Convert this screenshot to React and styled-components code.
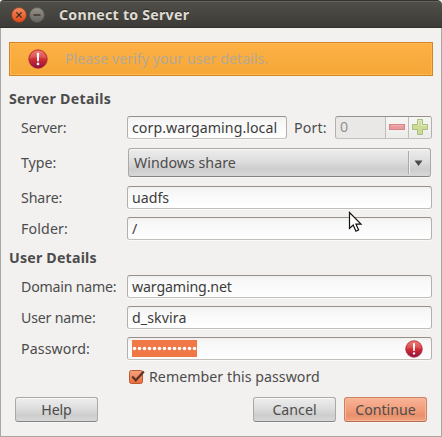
import React from "react";
import styled, { createGlobalStyle, css } from "styled-components";

const GlobalStyle = createGlobalStyle`
  html, body { margin: 0; padding: 0; background: #f2f1f0; overflow: hidden; }
  *, *::before, *::after { box-sizing: border-box; }
`;

const Window = styled.div`
  position: relative;
  width: 442px;
  height: 437px;
  display: flex;
  flex-direction: column;
  background: #f2f1f0;
  color: #4c4c4c;
  font: 14.2px/20px "Noto Sans", "Open Sans", sans-serif;
  white-space: nowrap;
`;

const TitleBar = styled.header`
  height: 28px;
  flex: none;
  display: flex;
  align-items: center;
  gap: 2px;
  padding: 1px 0 0 11px;
  background: linear-gradient(#504f49, #3c3b37);
  border-top: 1px solid #353430;
  border-bottom: 1px solid #31302c;
  box-shadow: inset 0 1px #65635c;
  border-radius: 4px 5px 0 0;
`;

const Title = styled.h1`
  margin: 0 0 0 12px;
  font-size: 14.2px;
  line-height: 20px;
  font-weight: 700;
  color: #dfdbd2;
  letter-spacing: ${(p) => p.$track}px;
  text-shadow: 0 -1px #2c2b28;
`;

const Body = styled.main`
  height: 409px;
  display: flex;
  flex-direction: column;
  padding: 14px 8px 0;
  border: solid #aaa6a2;
  border-width: 0 1px 1px;
`;

const Banner = styled.div`
  height: 34px;
  display: flex;
  align-items: center;
  gap: 17px;
  padding-left: 18px;
  border: 1px solid #cf8626;
  background: linear-gradient(#fdb146, #f5a737);
  box-shadow: inset 0 0 0 1px #ffb750;
  color: #b5a893;
`;

const Label = styled.span`
  letter-spacing: ${(p) => p.$track || 0}px;
`;

const Heading = styled.h2`
  margin: ${(p) => p.$top}px 0 0;
  height: 20px;
  font-size: 14.2px;
  line-height: 20px;
  font-weight: 700;
  letter-spacing: ${(p) => p.$track || 0}px;
`;

const Row = styled.div`
  display: grid;
  grid-template-columns: 106px 305px;
  align-items: center;
  height: ${(p) => p.$height || 23}px;
  margin: ${(p) => p.$top || 8}px 0 0 12px;
`;

const fieldEdge = css`
  border: 1px solid #b5b0aa;
  border-top-color: #97908a;
  border-bottom-color: #c3c0bc;
  border-radius: 3px;
`;

const Field = styled.div`
  ${fieldEdge}
  height: 23px;
  width: ${(p) => p.$width || 305}px;
  display: flex;
  align-items: center;
  justify-content: space-between;
  padding: 0 8px 0 4px;
  background: linear-gradient(#f1f1f1, #f7f7f7 20%, #fff);
  box-shadow: 0 1px #faf9f9;
  color: #3c3c3c;
`;

const ServerFields = styled.div`
  display: flex;
  align-items: center;
`;

const PortLabel = styled(Label)`
  width: 41px;
  margin-left: 7px;
`;

const Spin = styled.div`
  ${fieldEdge}
  width: 97px;
  height: 23px;
  display: grid;
  grid-template-columns: 49px 23px 23px;
  overflow: hidden;
  background: #e9e8e7;
  color: #929190;
`;

const SpinValue = styled.span`
  padding-left: 4px;
`;

const SpinButton = styled.button`
  padding: 0 1px 0 0;
  border: 0;
  border-left: 1px solid #c1beba;
  background: linear-gradient(#f5f5f4, #ececeb);
  display: grid;
  place-items: center;
`;

const raised = css`
  border: 1px solid #aaa9a7;
  border-bottom-color: #858482;
  border-radius: 3px;
  background: linear-gradient(#ededed, #dedede 45%, #cdcdcd 75%, #d8d8d8);
  box-shadow: inset 0 1px #f8f8f8, 0 1px #f8f7f6;
`;

const Combo = styled.div`
  ${raised}
  width: 303px;
  height: 29px;
  margin-left: 1px;
  padding-left: 5px;
  display: flex;
  align-items: center;
  justify-content: space-between;
`;

const ComboArrow = styled.span`
  width: 22px;
  height: 23px;
  display: grid;
  place-items: center;
  padding-right: 3px;
  border-left: 1px solid #aaa;
  box-shadow: inset 1px 0 #ececec;
`;

const Selection = styled.span`
  width: 65px;
  height: 17px;
  display: flex;
  align-items: center;
  background: #f07746;
`;

const Remember = styled.label`
  height: 20px;
  margin: 7px 0 0 120px;
  display: flex;
  align-items: center;
  gap: 4px;
`;

const Actions = styled.footer`
  display: flex;
  gap: 8px;
  margin: 10px 6px 0 6px;
`;

const Button = styled.button`
  ${raised}
  width: 83px;
  height: 25px;
  padding: 0;
  font: inherit;
  line-height: 20px;
  color: #4c4c4c;
  letter-spacing: ${(p) => p.$track || 0}px;
  ${(p) => p.$push && "margin-right: auto;"}
  ${(p) =>
    p.$primary &&
    css`
      border-color: #ca8263;
      border-bottom-color: #b66d4e;
      background: linear-gradient(#f8b497, #f2a07e 45%, #e9906c 75%, #f0a07f);
      box-shadow: inset 0 0 0 1px #f8b799, 0 1px #f8f7f6;
    `}
`;

const Pointer = styled.svg`
  position: absolute;
  left: 348px;
  top: 211px;
`;

function WindowButton({ kind }) {
  const close = kind === "close";
  return (
    <svg width="16" height="16" viewBox="0 0 16 16">
      <defs>
        <linearGradient id={kind} x2="0" y2="1">
          <stop stopColor={close ? "#f58a60" : "#94928a"} />
          <stop offset="1" stopColor={close ? "#df4a16" : "#67655e"} />
        </linearGradient>
      </defs>
      <circle cx="8" cy="8" r="7.4" fill={`url(#${kind})`} stroke={close ? "#8d3a1c" : "#55534d"} strokeWidth=".7" />
      <path d={close ? "M5.4 5.4l5.2 5.2M10.6 5.4l-5.2 5.2" : "M4.5 8h7"} stroke="#3a2a22" strokeWidth="1.3" />
    </svg>
  );
}

function ErrorIcon({ size, id }) {
  return (
    <svg width={size} height={size} viewBox="0 0 18 18">
      <defs>
        <linearGradient id={id} x2="0" y2="1">
          <stop stopColor="#ee6b5b" />
          <stop offset=".5" stopColor="#d22d35" />
          <stop offset="1" stopColor="#8c1240" />
        </linearGradient>
      </defs>
      <circle cx="9" cy="9" r="8.3" fill={`url(#${id})`} stroke="#a52335" strokeWidth=".7" />
      <path d="M1.5 9a7.5 7.5 0 0 1 15 0Q9 6.5 1.5 9z" fill="#fff" opacity=".13" />
      <path d="M7.9 3.3h2.2L9.8 11H8.2z" fill="#fff" />
      <circle cx="9" cy="13.4" r="1.2" fill="#fff" />
    </svg>
  );
}

function TextRow({ label, track, value, valueTrack, top }) {
  return (
    <Row $top={top}>
      <Label $track={track}>{label}</Label>
      <Field>
        <Label $track={valueTrack}>{value}</Label>
      </Field>
    </Row>
  );
}

export default function App() {
  return (
    <>
      <GlobalStyle />
      <Window>
        <TitleBar>
          <WindowButton kind="close" />
          <WindowButton kind="minimize" />
          <Title $track={0.23}>Connect to Server</Title>
        </TitleBar>
        <Body>
          <Banner>
            <ErrorIcon size={20} id="bannerError" />
            <Label $track={0.03}>Please verify your user details.</Label>
          </Banner>
          <Heading $top={13} $track={0.27}>Server Details</Heading>
          <Row $top={7}>
            <Label $track={-0.15}>Server:</Label>
            <ServerFields>
              <Field $width={160}>
                <Label $track={0.05}>corp.wargaming.local</Label>
              </Field>
              <PortLabel $track={0.15}>Port:</PortLabel>
              <Spin>
                <SpinValue>0</SpinValue>
                <SpinButton aria-label="Decrease">
                  <svg width="16" height="7">
                    <rect x=".5" y=".5" width="15" height="5" fill="#e89a9c" stroke="#d58487" />
                    <path d="M2 1.5h12" stroke="#f0b0b1" />
                  </svg>
                </SpinButton>
                <SpinButton aria-label="Increase">
                  <svg width="16" height="17">
                    <path d="M5.5.5h5v5h5v5h-5v5h-5v-5h-5v-5h5z" fill="#ccdb96" stroke="#a9bf81" />
                    <path d="M6.5 6.5v-5h3v5h5" fill="none" stroke="#e2ebbd" />
                  </svg>
                </SpinButton>
              </Spin>
            </ServerFields>
          </Row>
          <Row $top={9} $height={29}>
            <Label>Type:</Label>
            <Combo>
              <Label $track={0.03}>Windows share</Label>
              <ComboArrow>
                <svg width="9" height="6"><path d="M.5.5h8L4.5 6z" fill="#4b4b4b" /></svg>
              </ComboArrow>
            </Combo>
          </Row>
          <TextRow top={9} label="Share:" track={-0.1} value="uadfs" />
          <TextRow label="Folder:" track={0.15} value="/" />
          <Heading $top={8} $track={0.2}>User Details</Heading>
          <TextRow top={7} label="Domain name:" track={-0.22} value="wargaming.net" valueTrack={-0.14} />
          <TextRow label="User name:" track={-0.2} value="d_skvira" valueTrack={0.1} />
          <Row>
            <Label $track={0.1}>Password:</Label>
            <Field>
              <Selection>
                <svg width="65" height="5">
                  {Array.from({ length: 13 }, (_, i) => (
                    <circle key={i} cx={2.5 + i * 5} cy="2.5" r="1.8" fill="#fff" />
                  ))}
                </svg>
              </Selection>
              <ErrorIcon size={18} id="passwordError" />
            </Field>
          </Row>
          <Remember>
            <svg width="16" height="16" viewBox="0 0 16 16">
              <defs>
                <linearGradient id="check" x2="0" y2="1">
                  <stop stopColor="#f7a27f" />
                  <stop offset="1" stopColor="#ed6d3d" />
                </linearGradient>
              </defs>
              <rect x=".5" y="1.5" width="13" height="13" rx="2" fill="url(#check)" stroke="#b95a34" />
              <path d="M3.2 7.5l3.6 3.8L14.8 2.5" fill="none" stroke="#5a3324" strokeWidth="2.2" />
            </svg>
            <Label $track={0.04}>Remember this password</Label>
          </Remember>
          <Actions>
            <Button $push $track={-0.15}>Help</Button>
            <Button>Cancel</Button>
            <Button $primary>Continue</Button>
          </Actions>
        </Body>
        <Pointer width="15" height="23" viewBox="0 0 15 23">
          <path d="M1.5 1.5v16l3.7-3.4 2.7 6.1 2.7-1.2-2.6-5.8h5z" fill="#fff" stroke="#111" strokeWidth="1.2" />
        </Pointer>
      </Window>
    </>
  );
}
